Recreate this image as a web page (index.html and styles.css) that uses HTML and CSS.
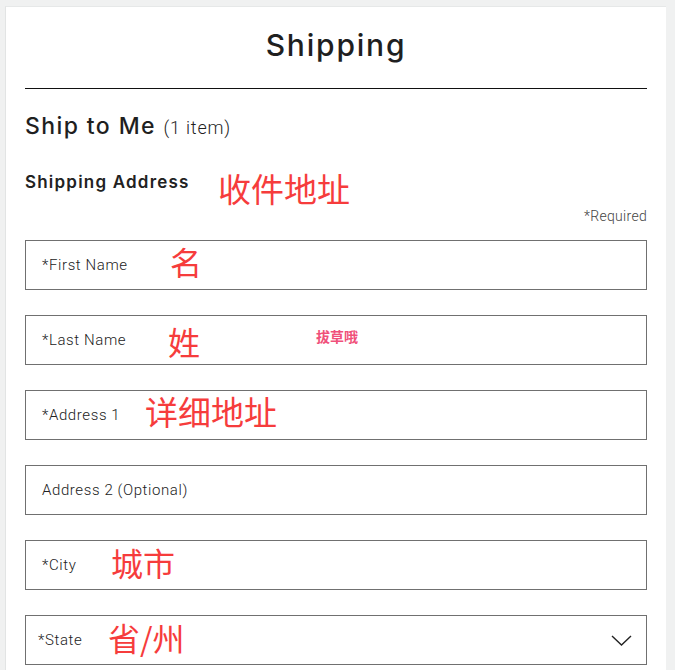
FILE: index.html
```html
<!DOCTYPE html>
<html lang="en">
<head>
  <meta charset="UTF-8">
  <title>Shipping</title>
  <link rel="stylesheet" href="styles.css">
</head>
<body>
  <div class="card">
    <h1 class="title">Shipping</h1>

    <h2 class="ship-to">Ship to Me <span class="count">(1 item)</span></h2>

    <div class="address-head">
      <h3 class="address-title">Shipping Address</h3>
      <span class="note note-head">收件地址</span>
    </div>
    <p class="required">*Required</p>

    <div class="field">
      <span class="field-label">*First Name</span>
      <span class="note note-first">名</span>
    </div>

    <div class="field">
      <span class="field-label">*Last Name</span>
      <span class="note note-last">姓</span>
      <span class="tag">拔草哦</span>
    </div>

    <div class="field">
      <span class="field-label">*Address 1</span>
      <span class="note note-addr">详细地址</span>
    </div>

    <div class="field">
      <span class="field-label">Address 2 (Optional)</span>
    </div>

    <div class="field">
      <span class="field-label">*City</span>
      <span class="note note-city">城市</span>
    </div>

    <div class="field field-select">
      <span class="field-label">*State</span>
      <span class="note note-state">省/州</span>
      <svg class="chevron" width="21" height="11" viewBox="0 0 21 11">
        <path d="M1 1 L10.5 10 L20 1" fill="none" stroke="#222" stroke-width="1.4"/>
      </svg>
    </div>
  </div>
</body>
</html>
```

FILE: styles.css
```css
body {
  margin: 0;
  background: #f0f1f1;
  font-family: Roboto, "Liberation Sans", "Noto Sans CJK SC", sans-serif;
  color: #222;
}
.card {
  margin: 6px 9px 0 5px;
  background: #fff;
  border-left: 1px solid #e2e4e4;
  border-top: 1px solid #e6e8e8;
  padding: 0 19px 20px 19px;
  min-height: 700px;
}
.title {
  margin: 0;
  padding: 20px 0 25px;
  text-align: center;
  font-family: Inter, "Liberation Sans", sans-serif;
  font-weight: 500;
  font-size: 30px;
  letter-spacing: 1.8px;
  line-height: 36px;
  color: #1f1f1f;
  border-bottom: 1px solid #111;
}
.ship-to {
  margin: 22px 0 0;
  font-family: Inter, "Liberation Sans", sans-serif;
  font-weight: 500;
  font-size: 23px;
  letter-spacing: 1.4px;
  line-height: 30px;
  color: #1f1f1f;
}
.count {
  font-family: Roboto, sans-serif;
  font-weight: 300;
  font-size: 18px;
  letter-spacing: 0.8px;
}
.address-head {
  position: relative;
  margin-top: 29px;
  height: 20px;
}
.address-title {
  margin: 0;
  font-family: Inter, "Liberation Sans", sans-serif;
  font-size: 17px;
  font-weight: 600;
  letter-spacing: 1.2px;
  line-height: 20px;
  color: #222;
}
.required {
  margin: 16px 0 16px;
  text-align: right;
  font-family: Roboto, sans-serif;
  font-weight: 300;
  font-size: 14px;
  letter-spacing: 0.3px;
  line-height: 16px;
  color: #444;
}
.field {
  position: relative;
  height: 48px;
  border: 1px solid #707070;
  margin-bottom: 25px;
  display: flex;
  align-items: center;
  padding: 0 16px;
}
.field-label {
  font-family: Roboto, sans-serif;
  font-weight: 300;
  font-size: 15px;
  letter-spacing: 0.6px;
  color: #222;
}
.field-select .field-label {
  margin-left: -4px;
}
.chevron {
  margin-left: auto;
  margin-right: -2px;
}
.note {
  position: absolute;
  color: #f63c3c;
  font-family: "Noto Sans CJK SC", sans-serif;
  font-size: 32px;
  line-height: 1;
}
.note-head { left: 193px; top: 0; font-size: 33px; }
.note-first { left: 144px; top: 4px; }
.note-last { left: 142px; top: 9px; }
.note-addr { left: 119px; top: 4px; font-size: 33px; }
.note-city { left: 85px; top: 5px; }
.note-state { left: 82px; top: 5px; }
.tag {
  position: absolute;
  left: 290px;
  top: 10px;
  color: #f0507a;
  font-family: "Noto Sans CJK SC", sans-serif;
  font-size: 14px;
  font-weight: bold;
}
```
